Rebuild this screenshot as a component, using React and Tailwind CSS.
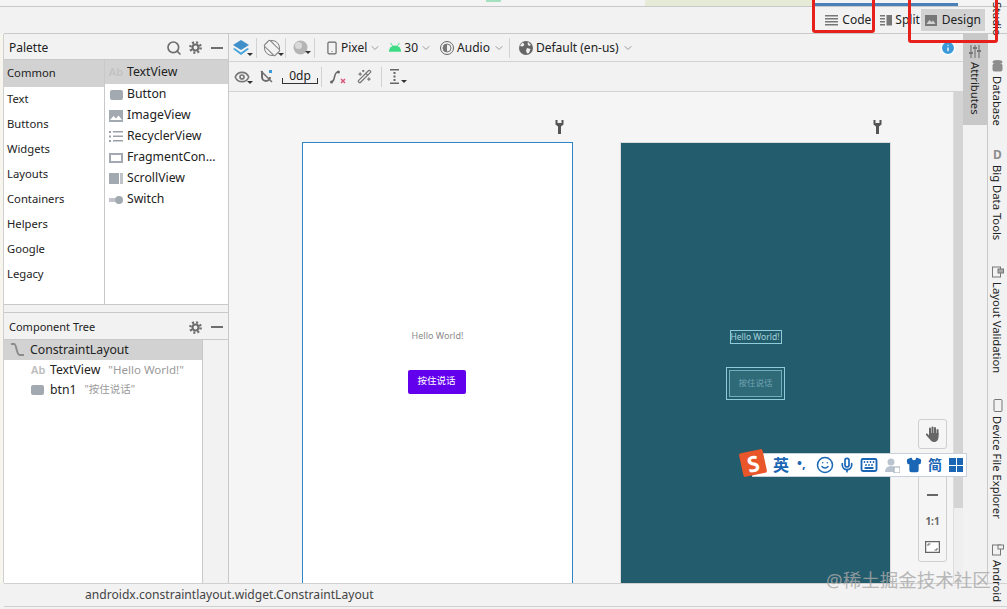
import React from 'react';
import { Search, Smartphone, ChevronDown, Eye, Wand2, Mic, Keyboard, Shirt, Smile, Info } from 'lucide-react';

const categories = ['Common', 'Text', 'Buttons', 'Widgets', 'Layouts', 'Containers', 'Helpers', 'Google', 'Legacy'];

const GreyBox = () => <span className="block w-[13px] h-[10px] rounded-[2px] bg-[#a3a9b1]" />;

const widgets = [
    { name: 'TextView', icon: <span className="text-[11px] font-semibold text-[#c3c3c3]">Ab</span> },
    { name: 'Button', icon: <GreyBox /> },
    {
        name: 'ImageView',
        icon: (
            <svg width="14" height="12" viewBox="0 0 14 12">
                <rect width="14" height="12" fill="#a3a9b1" />
                <path d="M1 10l3.500-4 2.500 2.500 2.500-3 3.500 4.500z" fill="#fff" />
            </svg>
        ),
    },
    {
        name: 'RecyclerView',
        icon: (
            <svg width="14" height="11" viewBox="0 0 14 11" fill="#9aa0a8">
                <rect width="2" height="2" /><rect x="4" width="10" height="1.500" />
                <rect y="4.500" width="2" height="2" /><rect x="4" y="4.500" width="10" height="1.500" />
                <rect y="9" width="2" height="2" /><rect x="4" y="9" width="10" height="1.500" />
            </svg>
        ),
    },
    { name: 'FragmentCon...', icon: <span className="block w-[14px] h-[10px] border-2 border-[#a3a9b1]" /> },
    {
        name: 'ScrollView',
        icon: (
            <span className="flex w-[14px] h-[11px] gap-px">
                <span className="flex-1 bg-[#a3a9b1]" />
                <span className="w-[3px] bg-[#c0c4ca]" />
            </span>
        ),
    },
    {
        name: 'Switch',
        icon: (
            <span className="flex items-center w-[14px]">
                <span className="w-[6px] h-[4px] bg-[#c0c4ca]" />
                <span className="w-[8px] h-[8px] rounded-full bg-[#a3a9b1]" />
            </span>
        ),
    },
];

const Caret = () => <span className="self-end mb-[1px] -ml-[3px] w-0 h-0 border-x-[3px] border-x-transparent border-t-[3px] border-t-[#333]" />;
const Sep = ({ className = '' }) => <span className={`w-px h-[20px] bg-[#d2d2d2] ${className}`} />;
const Chevron = () => <ChevronDown size={12} className="text-[#9a9a9a]" />;

const Gear = () => (
    <svg width="13" height="13" viewBox="0 0 13 13" fill="none" stroke="#6e6e6e">
        <circle cx="6.500" cy="6.500" r="3" strokeWidth="2.200" />
        <circle cx="6.500" cy="6.500" r="5.200" strokeWidth="2.400" strokeDasharray="2 2.080" />
    </svg>
);

const Dash = () => <span className="w-[12px] h-[2px] bg-[#6e6e6e]" />;

const Layers = () => (
    <svg width="18" height="18" viewBox="0 0 18 18">
        <path d="M9 1l8 5-8 5-8-5z" fill="#3f8fc9" />
        <path d="M2.500 9L1 10l8 6 8-6-1.500-1L9 13.500z" fill="#45a5dc" />
    </svg>
);

const Rotate = () => (
    <svg width="18" height="18" viewBox="0 0 18 18" fill="none" stroke="#7d7d7d" strokeWidth="1">
        <circle cx="9" cy="9" r="7.500" />
        <rect x="5" y="1.500" width="8" height="15" rx="1" fill="#f2f2f2" transform="rotate(-45 9 9)" />
    </svg>
);

const Android = ({ size = 14 }) => (
    <svg width={size} height={size * 0.75} viewBox="0 0 16 12" fill="#3ddc84">
        <path d="M1 11a7 7 0 0 1 14 0z" />
        <path d="M3 1l2.500 4M13 1l-2.500 4" stroke="#3ddc84" strokeWidth="1" />
    </svg>
);

const GlobeIcon = () => (
    <svg width="14" height="14" viewBox="0 0 14 14">
        <circle cx="7" cy="7" r="7" fill="#666" />
        <path d="M4 1.500l1.500 2.500-2 1.500L1 5a6 6 0 0 1 3-3.500zM8 7l3.500 1-1.500 4-2 .5-1-3zM9 1l3 3-2 1-1.500-2z" fill="#f2f2f2" />
    </svg>
);

const WrenchIcon = () => (
    <svg width="9" height="14" viewBox="0 0 9 14" fill="#555" className="shrink-0 mr-[9px] mb-[8px]">
        <path d="M0.500 0h2v3h4V0h2v4.500L6 6.500V14H3V6.500L0.500 4.500z" />
    </svg>
);

const Panel = ({ title, className, children }) => (
    <div className={`flex items-center pt-[2px] bg-[#f2f2f2] border-b border-[#c9c9c9] pl-[5px] pr-[5px] text-[#222] ${className}`}>
        <span className="flex-1">{title}</span>
        {children}
    </div>
);

const DesignBoard = ({ children, className }) => (
    <div className="flex flex-col items-end w-[271px] shrink-0">
        <WrenchIcon />
        <div className={className}>{children}</div>
    </div>
);

const VerticalTab = ({ icon, label, className }) => (
    <div className={`flex flex-col items-center gap-[4px] ${className}`}>
        {icon}
        <span className="[writing-mode:vertical-rl] text-[11.25px] text-[#222] leading-none">{label}</span>
    </div>
);

export default function App() {
    return (
        <div className="relative w-[1007px] h-[609px] overflow-hidden bg-[#f2f2f2] text-[#222] font-['Noto_Sans','Noto_Sans_CJK_SC',sans-serif]">
            {/* strip left over from the window above */}
            <div className="flex h-[7px] bg-[#f4f4f4] border-b border-[#c8c8c8]">
                <div className="w-[486px]" />
                <div className="w-[15px] h-[2px] bg-[#a5e0c0]" />
                <div className="w-[144px]" />
                <div className="w-[170px] bg-[#e6ebd8]" />
                <div className="flex flex-col justify-end w-[143px]"><div className="h-[3px] bg-[#4a7fb8]" /></div>
            </div>

            {/* editor mode row */}
            <div className="flex items-center justify-end h-[27px] pr-[22px] ml-[4px] border-b border-[#c9c9c9] bg-[#f2f2f2] text-[12px]">
                <div className="flex items-center gap-[4px] mr-[9px]">
                    <svg width="13" height="11" viewBox="0 0 13 11" fill="#777"><rect width="13" height="1.500" /><rect y="3" width="13" height="1.500" /><rect y="6" width="13" height="1.500" /><rect y="9" width="13" height="1.500" /></svg>
                    <span>Code</span>
                </div>
                <div className="flex items-center gap-[3px] mr-[1px]">
                    <svg width="12" height="11" viewBox="0 0 12 11" fill="#777"><rect width="5" height="1.500" /><rect y="3" width="5" height="1.500" /><rect y="6" width="5" height="1.500" /><rect y="9" width="5" height="1.500" /><rect x="6.500" width="5.500" height="10.500" /></svg>
                    <span>Split</span>
                </div>
                <div className="flex items-center gap-[5px] h-[22px] px-[4px] bg-[#d2d2d2]">
                    <svg width="12" height="11" viewBox="0 0 12 11"><rect width="12" height="11" fill="#777" /><path d="M1.500 9l3-4 2 2 1.500-1.500L10.500 9z" fill="#d2d2d2" /></svg>
                    <span>Design</span>
                </div>
            </div>

            <div className="flex h-[549px]">
                {/* left edge */}
                <div className="w-[4px] bg-[#f6f6ee] border-r border-[#d0d0d0]" />

                {/* palette + component tree */}
                <div className="flex flex-col w-[225px] shrink-0 border-r border-[#c9c9c9]">
                    <div className="flex flex-col h-[271px] border-b border-[#c9c9c9]">
                        <Panel title="Palette" className="h-[26px] text-[12px]">
                            <Search size={16} strokeWidth={2.500} className="text-[#6e6e6e] mr-[7px]" />
                            <span className="mr-[9px]"><Gear /></span>
                            <Dash />
                        </Panel>
                        <div className="flex flex-1 bg-white">
                            <div className="w-[101px] border-r border-[#c9c9c9] text-[11.25px]">
                                {categories.map((c, i) => (
                                    <div key={c} className={`flex items-center pl-[3px] ${i === 0 ? 'h-[27px] bg-[#d2d2d2]' : 'h-[25px]'}`}>{c}</div>
                                ))}
                            </div>
                            <div className="flex-1 text-[12.25px]">
                                {widgets.map((w, i) => (
                                    <div key={w.name} className={`flex items-center gap-[4px] pl-[4px] ${i === 0 ? 'h-[24px] bg-[#d2d2d2]' : 'h-[21px]'}`}>
                                        <span className="flex items-center justify-center w-[14px]">{w.icon}</span>
                                        <span>{w.name}</span>
                                    </div>
                                ))}
                            </div>
                        </div>
                    </div>
                    <div className="h-[8px] bg-[#f2f2f2] border-b border-[#c9c9c9]" />
                    <div className="flex flex-col flex-1">
                        <Panel title="Component Tree" className="h-[27px] text-[11px]">
                            <span className="mr-[9px]"><Gear /></span>
                            <Dash />
                        </Panel>
                        <div className="flex flex-1">
                            <div className="w-[199px] bg-white border-r border-[#c9c9c9] text-[12.25px]">
                                <div className="flex items-center gap-[5px] h-[20px] pl-[6px] bg-[#d2d2d2]">
                                    <svg width="15" height="14" viewBox="0 0 15 14" fill="none" stroke="#8d8d8d" strokeWidth="2"><path d="M1 1h3c3 0 2 11 6 11h4" /></svg>
                                    <span>ConstraintLayout</span>
                                </div>
                                <div className="flex items-center h-[20px] pl-[27px]">
                                    <span className="w-[19px] text-[11px] font-semibold text-[#bcbcbc]">Ab</span>
                                    <span>TextView</span>
                                    <span className="ml-[8px] text-[11.5px] text-[#9a9a9a]">"Hello World!"</span>
                                </div>
                                <div className="flex items-center h-[20px] pl-[27px]">
                                    <span className="w-[19px]"><GreyBox /></span>
                                    <span>btn1</span>
                                    <span className="ml-[8px] text-[10.5px] text-[#9a9a9a]">"按住说话"</span>
                                </div>
                            </div>
                            <div className="flex-1 bg-[#f2f2f2]" />
                        </div>
                    </div>
                </div>

                {/* design editor */}
                <div className="flex flex-col w-[734px] shrink-0">
                    <div className="flex items-center h-[28px] pl-[3px] border-b border-[#d2d2d2] text-[12px]">
                        <span className="flex"><Layers /><Caret /></span>
                        <Sep className="ml-[3px]" />
                        <span className="flex ml-[6px]"><Rotate /><Caret /></span>
                        <Sep className="ml-[1px]" />
                        <span className="flex items-center ml-[7px]">
                            <svg width="15" height="15" viewBox="0 0 15 15"><circle cx="7.500" cy="7.500" r="7" fill="#b5b5b5" /><circle cx="5.500" cy="5.500" r="3.500" fill="#d9d9d9" /></svg>
                            <Caret />
                        </span>
                        <Sep className="ml-[3px]" />
                        <span className="flex items-center ml-[10px] gap-[2px]"><Smartphone size={14} className="text-[#666]" /><span>Pixel</span><Chevron /></span>
                        <span className="flex items-center ml-[7px] gap-[2px]"><Android /><span>30</span><Chevron /></span>
                        <span className="flex items-center ml-[8px] gap-[3px]">
                            <svg width="14" height="14" viewBox="0 0 14 14"><circle cx="7" cy="7" r="6.500" fill="none" stroke="#666" /><path d="M7 3a4 4 0 0 0 0 8z" fill="#777" /><circle cx="7" cy="7" r="4" fill="none" stroke="#777" /></svg>
                            <span>Audio</span><Chevron />
                        </span>
                        <Sep className="ml-[4px]" />
                        <span className="flex items-center ml-[9px] gap-[3px]"><GlobeIcon /><span>Default (en-us)</span><Chevron /></span>
                        <Info size={16} className="ml-auto mr-[7px] text-white fill-[#3a9ad9]" />
                    </div>
                    <div className="flex items-center h-[30px] pl-[5px] border-b border-[#d2d2d2]">
                        <span className="flex"><Eye size={16} strokeWidth={2.500} className="text-[#777]" /><Caret /></span>
                        <svg width="15" height="15" viewBox="0 0 15 15" fill="none" stroke="#6e6e6e" strokeWidth="2" className="ml-[6px]"><path d="M3 2v6a4 4 0 0 0 8 0" /><path d="M2 2l11 11" strokeWidth="1.500" /><rect x="10" y="1" width="3" height="3" fill="#3a9ad9" stroke="none" /></svg>
                        <span className="flex items-end w-[36px] h-[15px] ml-[8px] border-b border-[#333] text-[12px] leading-[14px]">
                            <span className="w-px h-[5px] bg-[#333]" />
                            <span className="flex-1 text-center">0dp</span>
                            <span className="w-px h-[5px] bg-[#333]" />
                        </span>
                        <Sep className="ml-[3px]" />
                        <svg width="17" height="16" viewBox="0 0 17 16" fill="none" className="ml-[8px]"><path d="M1 13c5 0 2-10 7-10" stroke="#666" strokeWidth="1.500" /><circle cx="8.500" cy="3" r="1.500" fill="#666" /><circle cx="1.500" cy="13" r="1.500" fill="#666" /><path d="M11 10l4 4M15 10l-4 4" stroke="#d9557a" strokeWidth="1.500" /></svg>
                        <Wand2 size={15} className="ml-[10px] text-[#777]" />
                        <Sep className="ml-[9px]" />
                        <span className="flex ml-[8px]">
                            <svg width="10" height="15" viewBox="0 0 10 15" fill="#666"><rect width="9" height="1.500" /><rect y="13.500" width="9" height="1.500" /><rect x="3.500" y="3" width="2" height="2" /><rect x="3.500" y="6.500" width="2" height="2" /><rect x="3.500" y="10" width="2" height="2" /></svg>
                            <span className="w-[4px]" />
                            <Caret />
                        </span>
                    </div>

                    {/* canvas */}
                    <div className="relative flex flex-1 min-h-0 overflow-hidden bg-[#f5f5f5]">
                        <div className="flex flex-1 gap-[47px] pl-[73px] pt-[28px]">
                            <DesignBoard className="flex flex-col items-center w-full h-[470px] shrink-0 bg-white border border-[#2d86c9] pt-[186px]">
                                <span className="text-[9px] text-[#8a8a8a]">Hello World!</span>
                                <span className="flex items-center justify-center w-[58px] h-[24px] mt-[27px] mr-[2px] rounded-[2px] bg-[#6200ee] text-white text-[9.5px]">按住说话</span>
                            </DesignBoard>
                            <DesignBoard className="flex flex-col items-center w-full h-[470px] shrink-0 bg-[#235c6c] border border-[#dcdcdc] pt-[187px]">
                                <span className="flex items-center w-[52px] h-[14px] border border-[#8fcbd8] text-[8.5px] text-[#a4d4de]">Hello World!</span>
                                <span className="flex items-center justify-center w-[59px] h-[33px] mt-[23px] border border-[#8fcbd8] p-[2px]">
                                    <span className="flex flex-1 h-full items-center justify-center border border-[#6fb0bf] bg-[#2f6a79] text-[8.5px] text-[#6fa3b0]">按住说话</span>
                                </span>
                            </DesignBoard>
                        </div>
                        <div className="w-[10px] shrink-0 bg-[#efefef] border-l border-[#dedede]">
                            <div className="h-[416px] bg-[#d4d4d4]" />
                        </div>

                        {/* zoom controls */}
                        <div className="absolute left-[689px] top-[327px] flex items-center justify-center w-[29px] h-[30px] bg-[#f5f5f5] border border-[#cfcfcf] rounded-[3px]">
                            <svg width="15" height="16" viewBox="0 0 15 16" fill="#666">
                                <rect x="4" y="1.500" width="2" height="8" rx="1" />
                                <rect x="6.500" y="0.500" width="2" height="9" rx="1" />
                                <rect x="9" y="1" width="2" height="8" rx="1" />
                                <rect x="11.500" y="3" width="2" height="7" rx="1" />
                                <path d="M4 7h9.500v4c0 3-2 5-4.500 5-2 0-3-1-4-2.500L1 9c-.5-1 .8-2 1.700-1L4 9.500z" />
                            </svg>
                        </div>
                        <div className="absolute left-[689px] top-[372px] flex flex-col items-center w-[29px] h-[98px] pt-[29px] bg-[#f5f5f5] border border-[#cfcfcf] rounded-[3px] text-[#666]">
                            <span className="w-[11px] h-[2px] bg-[#666]" />
                            <span className="mt-[18px] text-[10px] font-bold leading-[14px]">1:1</span>
                            <svg width="15" height="12" viewBox="0 0 15 12" fill="none" stroke="#666" className="mt-[13px]">
                                <rect x="0.500" y="0.500" width="14" height="11" fill="#fff" strokeWidth="1.500" />
                                <path d="M3 5V3h2.500M12 7v2H9.500" />
                            </svg>
                        </div>
                    </div>
                </div>

                {/* attributes strip */}
                <div className="flex flex-col w-[25px] shrink-0 border-r border-[#c9c9c9] bg-[#f2f2f2] -mt-[1px]">
                    <VerticalTab
                        className="h-[92px] pt-[12px] bg-[#c8c8c8]"
                        icon={<svg width="12" height="13" viewBox="0 0 12 13" stroke="#777" strokeWidth="1.200"><path d="M2 0v13M6 0v13M10 0v13" /><path d="M0 8h4M4 3h4M8 6h4" strokeWidth="2" /></svg>}
                        label="Attributes"
                    />
                </div>

                {/* right tool strip */}
                <div className="flex flex-col flex-1 items-center -mt-[34px] pt-[2px]">
                    <span className="[writing-mode:vertical-rl] text-[11.25px] leading-none">Studio</span>
                    <VerticalTab
                        className="mt-[24px]"
                        icon={<svg width="11" height="12" viewBox="0 0 11 12" fill="#8d8d8d"><ellipse cx="5.500" cy="2" rx="5" ry="2" /><rect x="0.500" y="3.500" width="10" height="8" rx="2" /></svg>}
                        label="Database"
                    />
                    <VerticalTab
                        className="mt-[23px]"
                        icon={<span className="text-[12px] font-bold leading-none text-[#8d8d8d]">D</span>}
                        label="Big Data Tools"
                    />
                    <VerticalTab
                        className="mt-[26px]"
                        icon={<svg width="12" height="12" viewBox="0 0 12 12" fill="none" stroke="#777"><rect x="0.500" y="1" width="8" height="10" /><rect x="6" y="3" width="5.500" height="4" fill="#aaa" /></svg>}
                        label="Layout Validation"
                    />
                    <VerticalTab
                        className="mt-[26px]"
                        icon={<svg width="10" height="13" viewBox="0 0 10 13" fill="none" stroke="#777"><rect x="1" y="0.500" width="8" height="12" rx="1" /></svg>}
                        label="Device File Explorer"
                    />
                    <VerticalTab
                        className="mt-[25px]"
                        icon={<svg width="12" height="12" viewBox="0 0 12 12" fill="none" stroke="#777"><rect x="0.500" y="1" width="8" height="10" /><rect x="6" y="1" width="5.500" height="4" fill="#f2f2f2" /></svg>}
                        label="Android"
                    />
                </div>
            </div>

            {/* status bar */}
            <div className="flex items-center h-[24px] pt-[1px] ml-[4px] pl-[81px] bg-[#f2f2f2] border-y border-[#d0d0d0] text-[12.1px] text-[#444]">
                androidx.constraintlayout.widget.ConstraintLayout
            </div>

            {/* red annotation boxes */}
            <div className="absolute left-[812px] top-[-4px] w-[63px] h-[37px] border-[3px] border-[#e8201c] rounded-[3px]" />
            <div className="absolute left-[908px] top-[-4px] w-[90px] h-[47px] border-[3px] border-[#e8201c] rounded-[3px]" />

            {/* input method bar */}
            <div className="absolute left-[752px] top-[453px] flex items-center w-[215px] h-[24px] pl-[20px] bg-white border border-[#c8d0dc] text-[#1a66b5]">
                <span className="text-[16px] font-bold leading-none">英</span>
                <span className="ml-[8px] w-[12px] -mt-[4px] text-[13px] font-bold leading-none">•,</span>
                <Smile size={18} strokeWidth={2} className="ml-[7px]" />
                <Mic size={16} strokeWidth={2.500} className="ml-[5px]" />
                <Keyboard size={18} strokeWidth={2.500} className="ml-[5px]" />
                <svg width="15" height="15" viewBox="0 0 15 15" className="ml-[7px]">
                    <circle cx="6" cy="4" r="3.500" fill="#b9c4d0" />
                    <path d="M0 14c0-4 3-6 6-6s5 2 5 6z" fill="#b9c4d0" />
                    <rect x="9" y="9" width="6" height="6" fill="#fff" stroke="#9aa8b8" />
                </svg>
                <Shirt size={16} className="ml-[6px] fill-[#1a66b5]" />
                <span className="ml-[6px] text-[14px] font-bold leading-none">简</span>
                <span className="grid grid-cols-2 gap-px w-[14px] h-[14px] ml-[7px]">
                    <span className="bg-[#1a66b5]" /><span className="bg-[#1a66b5]" /><span className="bg-[#1a66b5]" /><span className="bg-[#1a66b5]" />
                </span>
            </div>
            <div className="absolute left-[741px] top-[451px] flex items-center justify-center w-[24px] h-[24px] rotate-[-12deg] rounded-[2px] bg-[#e8562a] text-white text-[22px] font-bold leading-none">S</div>

            {/* watermark */}
            <div className="absolute left-[826px] top-[571px] text-[18.5px] leading-none text-[#a8a8a8] opacity-80">@稀土掘金技术社区</div>
        </div>
    );
}
